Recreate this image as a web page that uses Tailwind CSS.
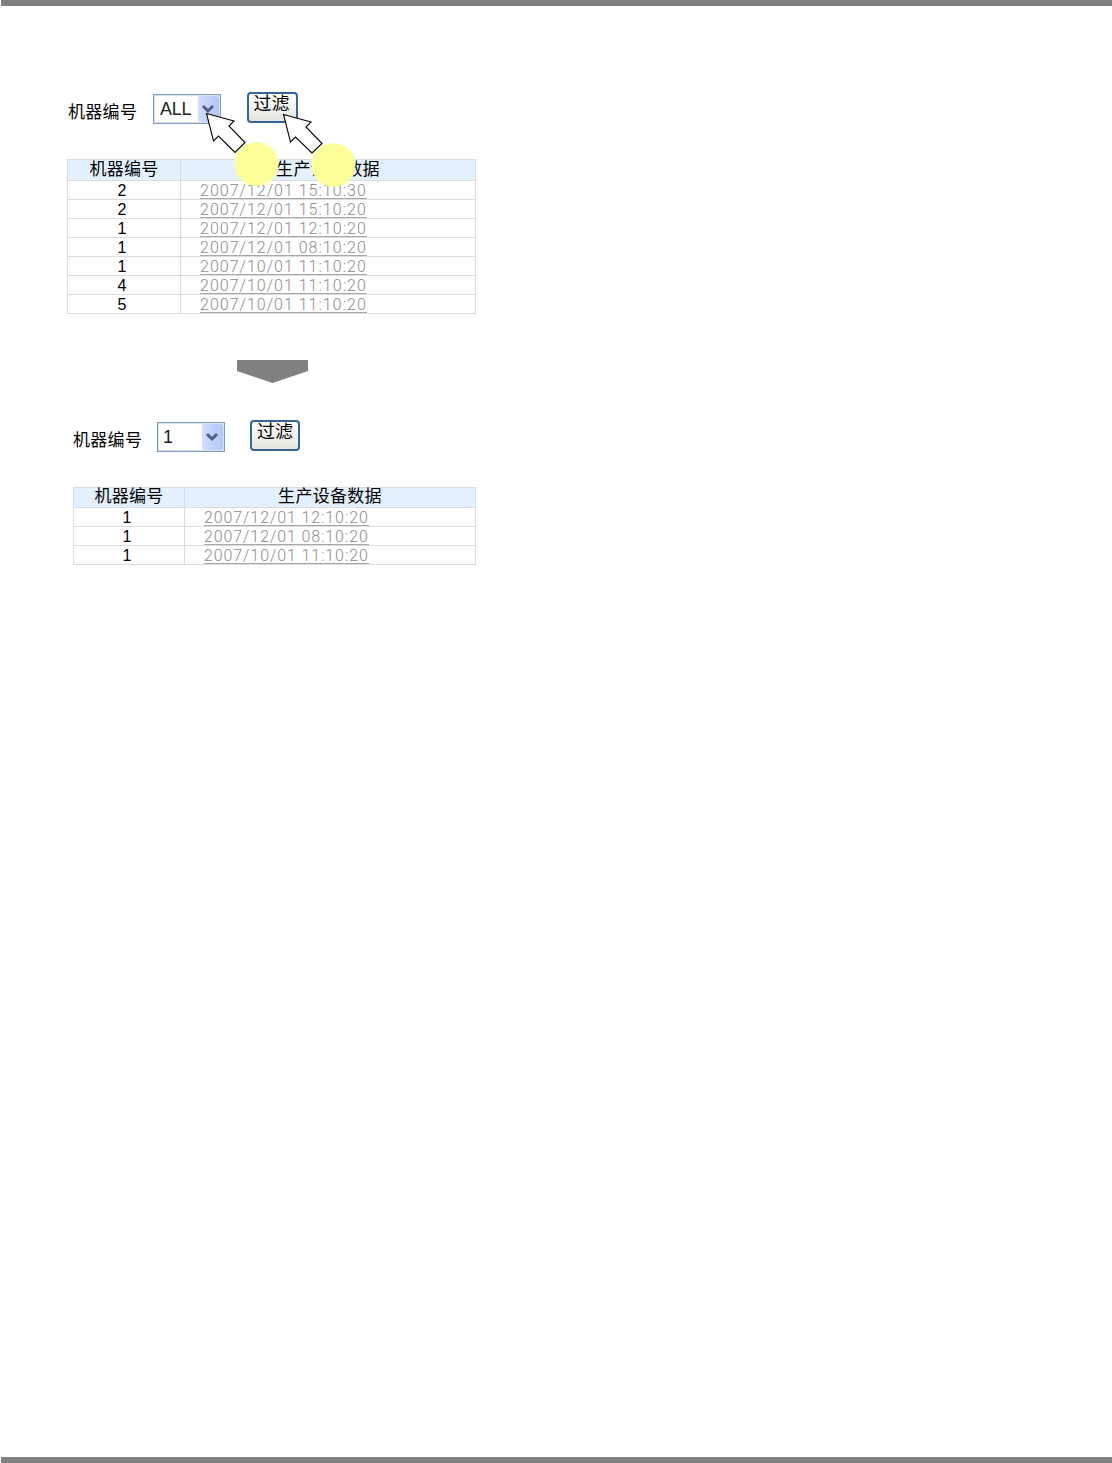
<!DOCTYPE html>
<html lang="zh-CN">
  <head>
    <meta charset="UTF-8" />
    <meta name="viewport" content="width=device-width, initial-scale=1.0" />
    <title>生产设备数据</title>
    <script src="https://cdn.jsdelivr.net/npm/@tailwindcss/browser@4"></script>
  </head>
  <body class="bg-white">
    <div class="h-[1463px] flex flex-col justify-between overflow-hidden pl-px font-['Liberation_Sans','Noto_Sans_CJK_SC',sans-serif] text-[17px] leading-5 text-black">
      <div class="h-1.5 shrink-0 bg-[#808080]"></div>

      <main class="grow pl-[66px] pt-[86px]">
        <!-- All machines -->
        <section class="relative w-[409px]">
          <form class="flex h-[67px] items-start">
            <label class="mt-[11px] w-[86px] whitespace-nowrap pl-px tracking-[0.3px]">机器编号</label>
            <div class="mt-0.5 flex h-[30px] w-[68px] justify-between border border-[#7f9db9] p-px shadow-[inset_0_0_0_1px_#d5e0ec]">
              <span class="pl-[5px] pt-[3px] text-[18px] tracking-[-0.3px] text-[#222]">ALL</span>
              <span class="flex w-[21px] items-center justify-center rounded-xs bg-linear-to-r from-[#d0deff] to-[#b1c7f8]">
                <svg class="mr-px h-2.5 w-3.5" viewBox="0 0 14 10" fill="none" stroke="#4d6185" stroke-width="3"><path d="M2 2 7 7 12 2" /></svg>
              </span>
            </div>
            <button type="button" class="ml-[26px] h-[31px] w-[51px] rounded-[4px] border-2 border-[#336699] bg-linear-to-b from-white to-[#e5e4dc] pb-2 pr-0.5 text-[18px] leading-5">过滤</button>
          </form>

          <div class="grid grid-cols-[113px_1fr] border-l border-t border-[#dcdcdc] text-center">
            <div class="h-[21px] border-b border-r border-[#dcdcdc] bg-[#e3f1fe] leading-5 tracking-[0.3px]">机器编号</div>
            <div class="h-[21px] border-b border-r border-[#dcdcdc] bg-[#e3f1fe] leading-5 tracking-[0.3px]">生产设备数据</div>
            <div class="h-[19px] border-b border-r border-[#dcdcdc] pr-1 text-base leading-[19px]">2</div>
            <div class="h-[19px] border-b border-r border-[#dcdcdc] pl-[19px] text-left font-['Roboto',sans-serif] text-base leading-[19px] font-light text-[#8c8c8c]"><a class="inline-block h-[18px] w-[167px] whitespace-nowrap border-b border-[#a8a8a8] tracking-[1.01px]">2007/12/01 15:10:30</a></div>
            <div class="h-[19px] border-b border-r border-[#dcdcdc] pr-1 text-base leading-[19px]">2</div>
            <div class="h-[19px] border-b border-r border-[#dcdcdc] pl-[19px] text-left font-['Roboto',sans-serif] text-base leading-[19px] font-light text-[#8c8c8c]"><a class="inline-block h-[18px] w-[167px] whitespace-nowrap border-b border-[#a8a8a8] tracking-[1.01px]">2007/12/01 15:10:20</a></div>
            <div class="h-[19px] border-b border-r border-[#dcdcdc] pr-1 text-base leading-[19px]">1</div>
            <div class="h-[19px] border-b border-r border-[#dcdcdc] pl-[19px] text-left font-['Roboto',sans-serif] text-base leading-[19px] font-light text-[#8c8c8c]"><a class="inline-block h-[18px] w-[167px] whitespace-nowrap border-b border-[#a8a8a8] tracking-[1.01px]">2007/12/01 12:10:20</a></div>
            <div class="h-[19px] border-b border-r border-[#dcdcdc] pr-1 text-base leading-[19px]">1</div>
            <div class="h-[19px] border-b border-r border-[#dcdcdc] pl-[19px] text-left font-['Roboto',sans-serif] text-base leading-[19px] font-light text-[#8c8c8c]"><a class="inline-block h-[18px] w-[167px] whitespace-nowrap border-b border-[#a8a8a8] tracking-[1.01px]">2007/12/01 08:10:20</a></div>
            <div class="h-[19px] border-b border-r border-[#dcdcdc] pr-1 text-base leading-[19px]">1</div>
            <div class="h-[19px] border-b border-r border-[#dcdcdc] pl-[19px] text-left font-['Roboto',sans-serif] text-base leading-[19px] font-light text-[#8c8c8c]"><a class="inline-block h-[18px] w-[167px] whitespace-nowrap border-b border-[#a8a8a8] tracking-[1.01px]">2007/10/01 11:10:20</a></div>
            <div class="h-[19px] border-b border-r border-[#dcdcdc] pr-1 text-base leading-[19px]">4</div>
            <div class="h-[19px] border-b border-r border-[#dcdcdc] pl-[19px] text-left font-['Roboto',sans-serif] text-base leading-[19px] font-light text-[#8c8c8c]"><a class="inline-block h-[18px] w-[167px] whitespace-nowrap border-b border-[#a8a8a8] tracking-[1.01px]">2007/10/01 11:10:20</a></div>
            <div class="h-[19px] border-b border-r border-[#dcdcdc] pr-1 text-base leading-[19px]">5</div>
            <div class="h-[19px] border-b border-r border-[#dcdcdc] pl-[19px] text-left font-['Roboto',sans-serif] text-base leading-[19px] font-light text-[#8c8c8c]"><a class="inline-block h-[18px] w-[167px] whitespace-nowrap border-b border-[#a8a8a8] tracking-[1.01px]">2007/10/01 11:10:20</a></div>
          </div>

          <!-- Pointers over the select and the button -->
          <svg class="absolute left-[138px] top-5 h-[76px] w-[152px]" viewBox="205 112 152 76">
            <g fill="#fff" stroke="#000" stroke-width="1.1">
              <path d="M206.500 113.500 234 121 229 126 245 142.500 235 152.500 218.500 136 213.500 141Z" />
              <path d="M283.500 114.500 311 122 306 127 322 143.500 312 153 295.500 137 290.500 142Z" />
            </g>
            <circle cx="256.500" cy="164" r="22" fill="#ffff99" />
            <circle cx="333.500" cy="165" r="22" fill="#ffff99" />
          </svg>
        </section>

        <svg class="ml-[170px] mt-[46px] block h-[23px] w-[71px]" viewBox="0 0 71 23"><path d="M0 0H71V11L35.500 23 0 11Z" fill="#808080" /></svg>

        <!-- Filtered to machine 1 -->
        <section class="ml-[6px] mt-[37px] w-[403px]">
          <form class="flex h-[67px] items-start">
            <label class="mt-[11px] w-[84px] whitespace-nowrap tracking-[0.3px]">机器编号</label>
            <div class="mt-0.5 flex h-[30px] w-[68px] justify-between border border-[#7f9db9] p-px shadow-[inset_0_0_0_1px_#d5e0ec]">
              <span class="pl-1 pt-[3px] text-[18px] text-[#222]">1</span>
              <span class="flex w-[21px] items-center justify-center rounded-xs bg-linear-to-r from-[#d0deff] to-[#b1c7f8]">
                <svg class="mr-px h-2.5 w-3.5" viewBox="0 0 14 10" fill="none" stroke="#4d6185" stroke-width="3"><path d="M2 2 7 7 12 2" /></svg>
              </span>
            </div>
            <button type="button" class="ml-[25px] h-[31px] w-[50px] rounded-[4px] border-2 border-[#336699] bg-linear-to-b from-white to-[#e5e4dc] pb-[7px] text-[18px] leading-5">过滤</button>
          </form>

          <div class="grid grid-cols-[111px_1fr] border-l border-t border-[#dcdcdc] text-center">
            <div class="h-5 border-b border-r border-[#dcdcdc] bg-[#e3f1fe] leading-[18px] tracking-[0.3px]">机器编号</div>
            <div class="h-5 border-b border-r border-[#dcdcdc] bg-[#e3f1fe] leading-[18px] tracking-[0.3px]">生产设备数据</div>
            <div class="h-[19px] border-b border-r border-[#dcdcdc] pr-1 text-base leading-[19px]">1</div>
            <div class="h-[19px] border-b border-r border-[#dcdcdc] pl-[19px] text-left font-['Roboto',sans-serif] text-base leading-[19px] font-light text-[#8c8c8c]"><a class="inline-block h-[18px] w-[165px] whitespace-nowrap border-b border-[#a8a8a8] tracking-[0.9px]">2007/12/01 12:10:20</a></div>
            <div class="h-[19px] border-b border-r border-[#dcdcdc] pr-1 text-base leading-[19px]">1</div>
            <div class="h-[19px] border-b border-r border-[#dcdcdc] pl-[19px] text-left font-['Roboto',sans-serif] text-base leading-[19px] font-light text-[#8c8c8c]"><a class="inline-block h-[18px] w-[165px] whitespace-nowrap border-b border-[#a8a8a8] tracking-[0.9px]">2007/12/01 08:10:20</a></div>
            <div class="h-[19px] border-b border-r border-[#dcdcdc] pr-1 text-base leading-[19px]">1</div>
            <div class="h-[19px] border-b border-r border-[#dcdcdc] pl-[19px] text-left font-['Roboto',sans-serif] text-base leading-[19px] font-light text-[#8c8c8c]"><a class="inline-block h-[18px] w-[165px] whitespace-nowrap border-b border-[#a8a8a8] tracking-[0.9px]">2007/10/01 11:10:20</a></div>
          </div>
        </section>
      </main>

      <div class="h-1.5 shrink-0 bg-[#808080]"></div>
    </div>
  </body>
</html>
